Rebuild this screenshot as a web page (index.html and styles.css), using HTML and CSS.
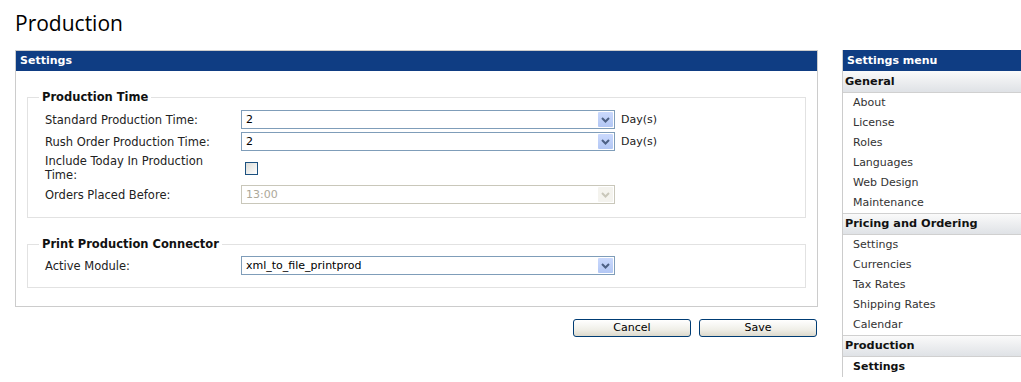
FILE: index.html
```html
<!DOCTYPE html>
<html>
<head>
<meta charset="utf-8">
<title>Production</title>
<link rel="stylesheet" href="styles.css">
</head>
<body>
<h1 class="title">Production</h1>
<div class="layout">
  <div class="main">
    <div class="panel">
      <div class="panel-head">Settings</div>
      <div class="panel-body">
        <fieldset class="group">
          <legend class="legend">Production Time</legend>
          <div class="rows">
            <div class="row">
              <div class="label">Standard Production Time:</div>
              <div class="select"><span class="val">2</span><span class="arrow"><svg width="9" height="6" viewBox="0 0 9 6"><path d="M1 1 L4.5 4.5 L8 1" fill="none" stroke="#4d6185" stroke-width="2"/></svg></span></div>
              <span class="unit">Day(s)</span>
            </div>
            <div class="row">
              <div class="label">Rush Order Production Time:</div>
              <div class="select"><span class="val">2</span><span class="arrow"><svg width="9" height="6" viewBox="0 0 9 6"><path d="M1 1 L4.5 4.5 L8 1" fill="none" stroke="#4d6185" stroke-width="2"/></svg></span></div>
              <span class="unit">Day(s)</span>
            </div>
            <div class="row row-check">
              <div class="label">Include Today In Production Time:</div>
              <span class="checkbox"></span>
            </div>
            <div class="row">
              <div class="label">Orders Placed Before:</div>
              <div class="select disabled"><span class="val">13:00</span><span class="arrow"><svg width="9" height="6" viewBox="0 0 9 6"><path d="M1 1 L4.5 4.5 L8 1" fill="none" stroke="#c9c7ba" stroke-width="2"/></svg></span></div>
            </div>
          </div>
        </fieldset>
        <fieldset class="group group-2">
          <legend class="legend">Print Production Connector</legend>
          <div class="rows">
            <div class="row">
              <div class="label">Active Module:</div>
              <div class="select"><span class="val">xml_to_file_printprod</span><span class="arrow"><svg width="9" height="6" viewBox="0 0 9 6"><path d="M1 1 L4.5 4.5 L8 1" fill="none" stroke="#4d6185" stroke-width="2"/></svg></span></div>
            </div>
          </div>
        </fieldset>
      </div>
    </div>
    <div class="actions">
      <button class="btn">Cancel</button>
      <button class="btn">Save</button>
    </div>
  </div>
  <div class="sidebar">
    <div class="side-head">Settings menu</div>
    <div class="sec-head first">General</div>
    <div class="item">About</div>
    <div class="item">License</div>
    <div class="item">Roles</div>
    <div class="item">Languages</div>
    <div class="item">Web Design</div>
    <div class="item">Maintenance</div>
    <div class="sec-head">Pricing and Ordering</div>
    <div class="item">Settings</div>
    <div class="item">Currencies</div>
    <div class="item">Tax Rates</div>
    <div class="item">Shipping Rates</div>
    <div class="item">Calendar</div>
    <div class="sec-head">Production</div>
    <div class="item active">Settings</div>
  </div>
</div>
</body>
</html>
```

FILE: styles.css
```css
html, body {
  margin: 0;
  padding: 0;
  background: #fff;
}
body {
  font-family: "DejaVu Sans", Verdana, sans-serif;
  font-size: 11px;
  color: #222;
  overflow: hidden;
}
.title {
  margin: 0;
  padding: 8px 0 0 15px;
  height: 42px;
  font-family: "Open Sans", "Liberation Sans", sans-serif;
  font-size: 21px;
  font-weight: normal;
  color: #000;
  line-height: 30px;
}
.layout {
  display: flex;
  align-items: flex-start;
}
.main {
  width: 803px;
  margin-left: 15px;
}
.panel {
  border: 1px solid #cccccc;
}
.panel-head {
  height: 20px;
  line-height: 20px;
  background: #0f3d83;
  color: #fff;
  font-weight: bold;
  padding-left: 4px;
}
.panel-body {
  padding: 20px 11px 18px 11px;
}
.group {
  margin: 0;
  padding: 0 0 13px 0;
  border: 1px solid #e2e2e2;
}
.group-2 {
  margin-top: 20px;
  padding-bottom: 12px;
}
.legend {
  margin-left: 11px;
  padding: 0 3px;
  font-weight: bold;
  color: #111;
  font-size: 11.5px;
  line-height: 13px;
}
.rows {
  display: flex;
  flex-direction: column;
  gap: 3px;
  padding: 6px 0 0 17px;
}
.group-2 .rows {
  padding-top: 5px;
}
.row {
  display: flex;
  align-items: center;
  min-height: 19px;
}
.label {
  width: 196px;
  line-height: 14px;
  font-size: 11.5px;
  color: #222;
}
.row-check .label {
  width: 172px;
  margin-right: 24px;
}
.select {
  box-sizing: border-box;
  width: 374px;
  height: 19px;
  border: 1px solid #7f9db9;
  background: #fff;
  display: flex;
  align-items: center;
}
.select .val {
  flex: 1;
  padding-left: 4px;
  color: #000;
}
.select .arrow {
  width: 15px;
  height: 15px;
  margin-right: 1px;
  background: linear-gradient(#cad9fd, #b3c7f4);
  border-radius: 1px;
  display: flex;
  align-items: center;
  justify-content: center;
}
.select.disabled {
  border-color: #c9c7ba;
}
.select.disabled .val {
  color: #aca899;
}
.select.disabled .arrow {
  background: #f4f3ee;
}
.unit {
  margin-left: 6px;
  color: #222;
}
.checkbox {
  box-sizing: border-box;
  width: 13px;
  height: 13px;
  margin-left: 4px;
  border: 1px solid #1c5180;
  background: linear-gradient(135deg, #dcdcd7, #ffffff);
}
.actions {
  display: flex;
  justify-content: flex-end;
  gap: 8px;
  padding: 12px 1px 0 0;
}
.btn {
  box-sizing: border-box;
  width: 118px;
  height: 18px;
  padding: 0;
  border: 1px solid #003c74;
  border-radius: 3px;
  background: linear-gradient(#ffffff, #f0efe8 60%, #dcd9cc);
  font-family: "DejaVu Sans", Verdana, sans-serif;
  font-size: 11px;
  color: #000;
  line-height: 14px;
}
.sidebar {
  margin-left: 24px;
  flex: 1;
  border-left: 1px solid #cccccc;
}
.side-head {
  height: 21px;
  line-height: 21px;
  background: #0f3d83;
  color: #fff;
  font-weight: bold;
  padding-left: 4px;
}
.sec-head {
  height: 20px;
  line-height: 20px;
  padding-left: 2px;
  border-top: 1px solid #d0d0d0;
  border-bottom: 1px solid #d0d0d0;
  background: linear-gradient(#fafafa, #dfe2e6);
  font-weight: bold;
  color: #111;
  font-size: 11.3px;
}
.sec-head.first {
  border-top: none;
  height: 21px;
  line-height: 21px;
}
.item {
  height: 20px;
  line-height: 20px;
  padding-left: 10px;
  color: #333;
}
.item.active {
  font-weight: bold;
  color: #111;
}
```
